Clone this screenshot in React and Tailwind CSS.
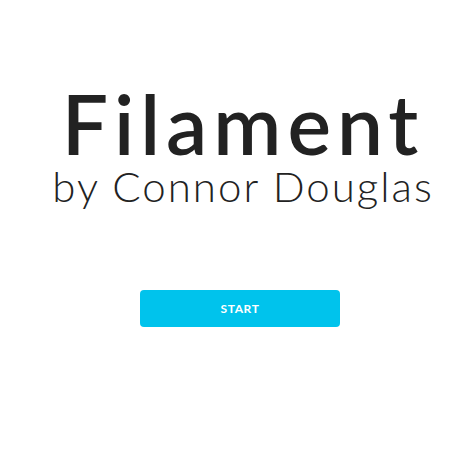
export default function App() {
  return (
    <div className="min-h-[476px] w-full bg-white flex flex-col items-center pt-[83px] pl-[4px] font-['Lato','Liberation_Sans',sans-serif] text-[#222222]">
      <h1 className="text-[82px] leading-[80px] font-semibold tracking-[6px] pl-[6px]">Filament</h1>
      <p className="text-[42px] leading-[44px] font-light tracking-[2px] pl-[6px] mt-[1px]">by Connor Douglas</p>
      <button className="mt-[82px] w-[200px] h-[37px] rounded-[4px] bg-[#00c3ec] text-white text-[12px] font-bold tracking-[0.6px] uppercase">
        Start
      </button>
    </div>
  );
}
